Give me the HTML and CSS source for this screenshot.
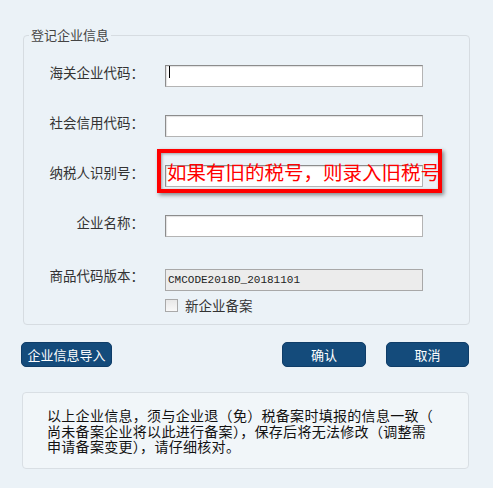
FILE: index.html
```html
<!DOCTYPE html>
<html lang="zh-CN">
<head>
  <meta charset="UTF-8" />
  <title>登记企业信息</title>
  <link rel="stylesheet" href="styles.css">
</head>
<body>
  <div class="page">
    <fieldset class="panel">
      <legend>登记企业信息</legend>

      <div class="rows">
        <div class="row">
          <label>海关企业代码：</label>
          <div class="field-wrap">
            <input type="text" class="txt" name="customs_code">
            <span class="caret"></span>
          </div>
        </div>

        <div class="row">
          <label>社会信用代码：</label>
          <div class="field-wrap">
            <input type="text" class="txt" name="credit_code">
          </div>
        </div>

        <div class="row">
          <label>纳税人识别号：</label>
          <div class="field-wrap">
            <input type="text" class="txt" name="tax_no">
            <!-- 标注：红框提示 -->
            <span class="callout"></span>
            <span class="callout-text">如果有旧的税号，则录入旧税号</span>
          </div>
        </div>

        <div class="row">
          <label>企业名称：</label>
          <div class="field-wrap">
            <input type="text" class="txt" name="company_name">
          </div>
        </div>

        <div class="row row-version">
          <label>商品代码版本：</label>
          <div class="field-wrap">
            <input type="text" class="txt txt-readonly" name="code_version" value="CMCODE2018D_20181101" readonly>
          </div>
        </div>

        <div class="row row-check">
          <label></label>
          <label class="check"><input type="checkbox" name="new_company"> 新企业备案</label>
        </div>
      </div>
    </fieldset>

    <div class="actions">
      <button type="button" class="btn btn-import">企业信息导入</button>
      <div class="actions-right">
        <button type="button" class="btn btn-ok">确认</button>
        <button type="button" class="btn btn-cancel">取消</button>
      </div>
    </div>

    <div class="notice">
      <p>以上企业信息，须与企业退（免）税备案时填报的信息一致（</p>
      <p>尚未备案企业将以此进行备案），保存后将无法修改（调整需</p>
      <p>申请备案变更），请仔细核对。</p>
    </div>
  </div>
</body>
</html>
```

FILE: styles.css
```css
body {
  margin: 0;
  background: #ebf2f7;
  font-family: "Noto Sans CJK SC", "Noto Sans", sans-serif;
  color: #333;
}
.page {
  padding: 27px 24px 0 22px;
}
.panel {
  margin: 0 0 0 1px;
  padding: 0 0 9px 0;
  border: 1px solid #d6dce1;
  border-radius: 4px;
  width: 447px;
  box-sizing: border-box;
}
.panel legend {
  margin-left: 5px;
  padding: 0 2px;
  font-size: 13px;
  line-height: 16px;
  color: #444;
}
.rows {
  display: flex;
  flex-direction: column;
  gap: 28px;
  padding-top: 18px;
}
.row {
  display: flex;
  align-items: center;
}
.row > label:first-child {
  width: 120px;
  margin-right: 21px;
  text-align: right;
  font-size: 13.5px;
  color: #333;
  white-space: nowrap;
}
.row-version {
  margin-top: 3px;
}
.row-check {
  margin-top: -19px;
}
.field-wrap {
  position: relative;
  width: 258px;
  height: 22px;
}
.txt {
  width: 100%;
  height: 22px;
  margin: 0;
  padding: 0 2px;
  box-sizing: border-box;
  border: 1px solid;
  border-color: #8c8c8c #b4b4b4 #b4b4b4 #8c8c8c;
  box-shadow: inset 1px 1px 1px rgba(0,0,0,0.12);
  background: #fff;
  font-size: 13px;
  outline: none;
}
.txt-readonly {
  background: #ececec;
  border-color: #a8a8a8;
  box-shadow: none;
  font-family: "Liberation Mono", monospace;
  font-size: 11px;
  color: #222;
}
.caret {
  position: absolute;
  left: 4px;
  top: 5px;
  width: 1px;
  height: 12px;
  background: #000;
}
.callout {
  position: absolute;
  left: -8px;
  top: -12px;
  right: -19px;
  bottom: -10px;
  border: 4px solid #f00;
  box-shadow: 2px 2px 4px rgba(0,0,0,0.45), inset 1px 1px 3px rgba(0,0,0,0.35);
}
.callout-text {
  position: absolute;
  left: 2px;
  top: -1px;
  line-height: 24px;
  font-size: 19.5px;
  color: #f00;
  white-space: nowrap;
}
.check {
  display: flex;
  align-items: center;
  gap: 7px;
  font-size: 13.5px;
  color: #333;
}
.check input {
  appearance: none;
  width: 13px;
  height: 13px;
  margin: 0;
  border: 1px solid #a9a9a9;
  background: linear-gradient(#e8e8e8, #f8f8f8);
}
.actions {
  display: flex;
  justify-content: space-between;
  margin-top: 17px;
  width: 447px;
}
.actions-right {
  display: flex;
  gap: 20px;
}
.btn {
  height: 25px;
  padding: 0;
  border: 1px solid #0f3d68;
  border-radius: 5px;
  background: #144b7b;
  color: #fff;
  font-family: "Noto Sans CJK SC", sans-serif;
  font-size: 13px;
  cursor: pointer;
}
.btn-import { width: 91px; margin-left: -1px; }
.btn-ok { width: 84px; }
.btn-cancel { width: 83px; }
.notice {
  margin-top: 25px;
  width: 447px;
  height: 77px;
  box-sizing: border-box;
  padding: 15px 10px 0 24px;
  border: 1px solid #d9dfe4;
  border-radius: 4px;
  background: #f1f6f9;
  font-size: 14px;
  color: #111;
  letter-spacing: 0.3px;
}
.notice p {
  margin: 0;
  height: 15.5px;
  line-height: 15.5px;
  white-space: nowrap;
}
```
